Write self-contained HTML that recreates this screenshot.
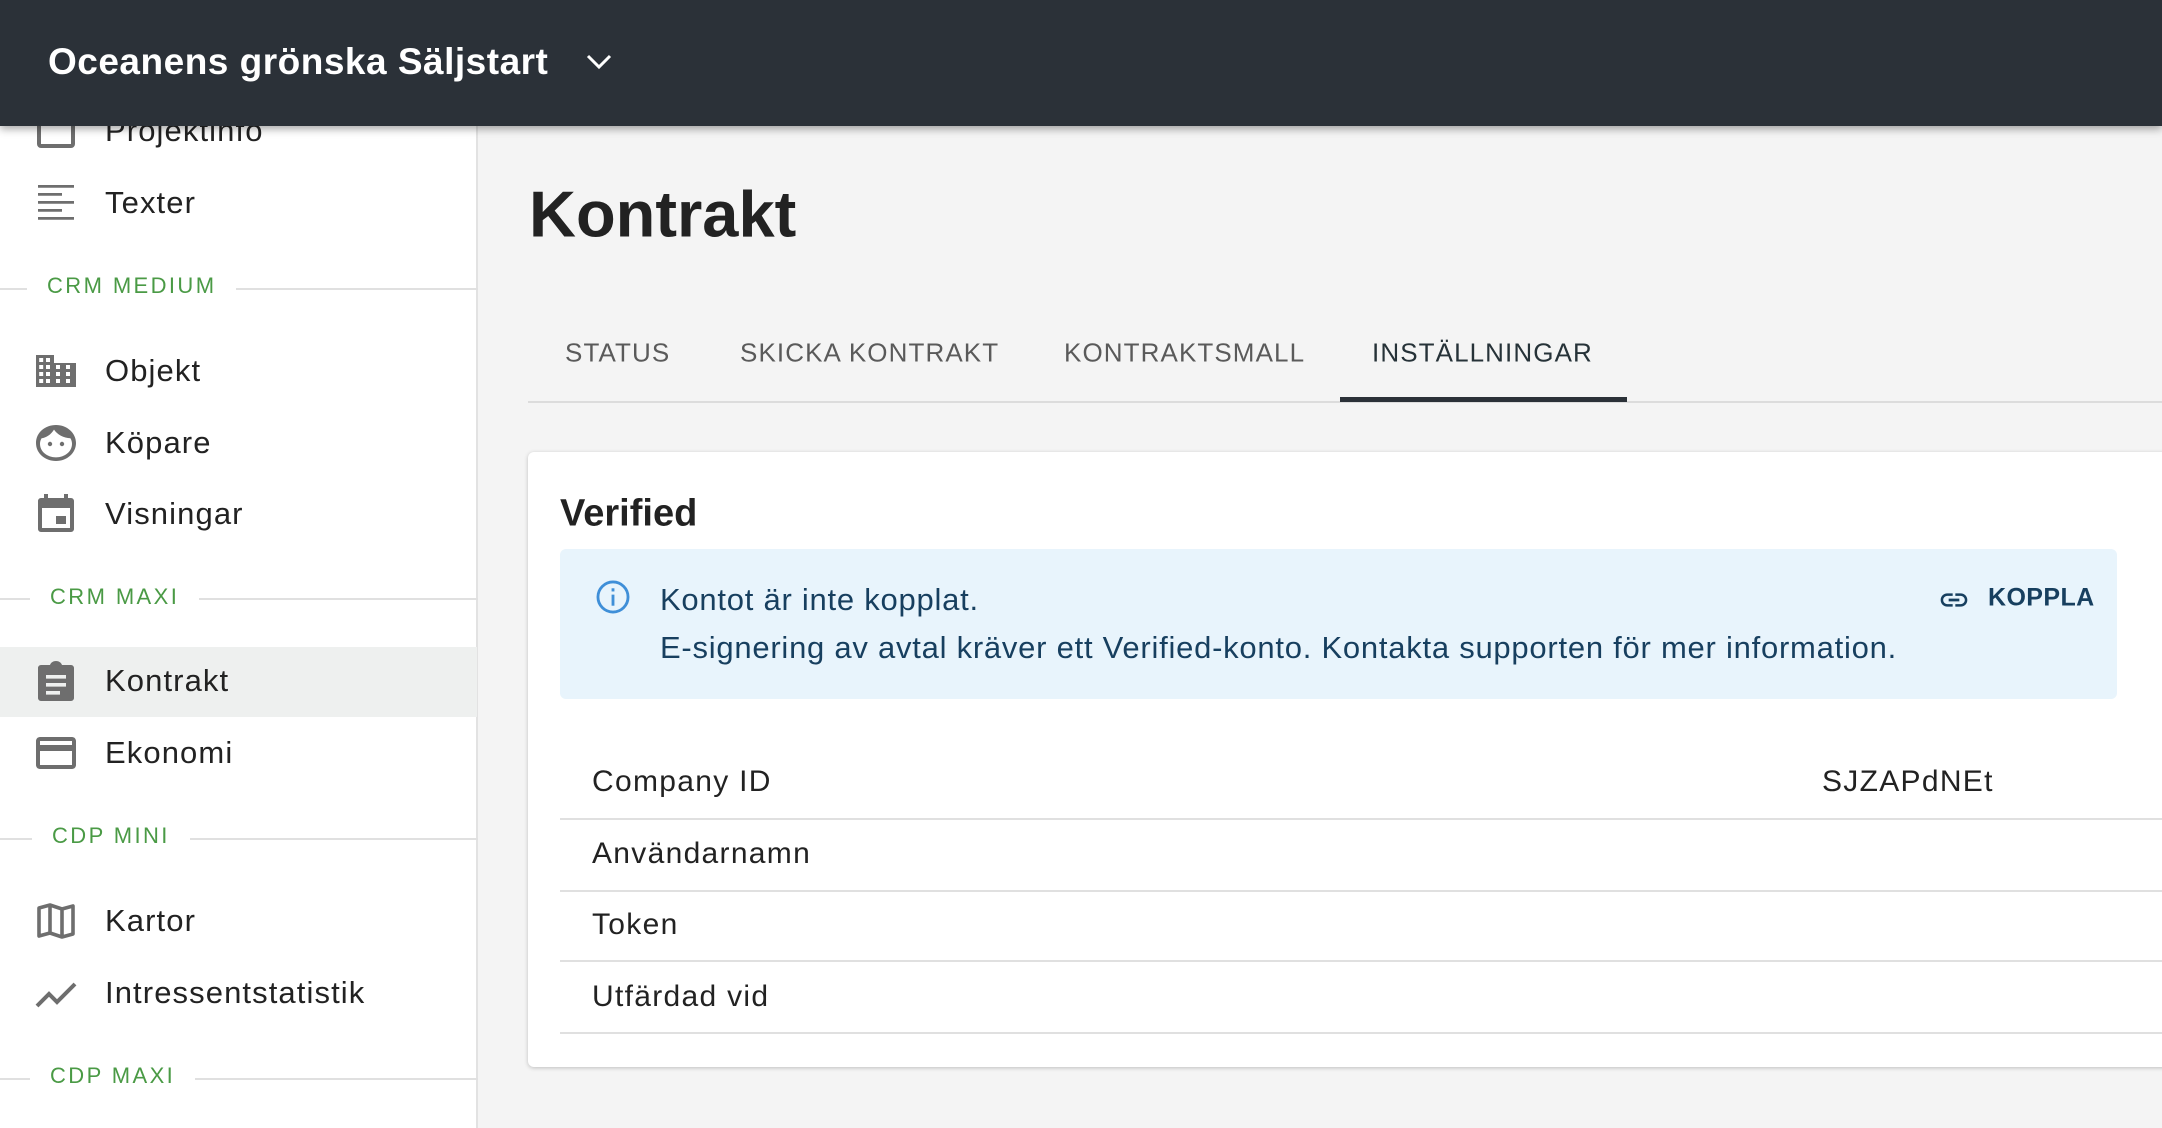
<!DOCTYPE html>
<html><head><meta charset="utf-8"><style>
*{margin:0;padding:0;box-sizing:border-box}
body{width:2162px;height:1128px;overflow:hidden;background:#f4f4f4;font-family:"Liberation Sans",sans-serif;position:relative;color:#222}
.a{position:absolute;white-space:nowrap}
#hdr{left:0;top:0;width:2162px;height:126px;background:#2b3138;box-shadow:0 3px 8px rgba(0,0,0,.35);z-index:5}
#side{left:0;top:0;width:478px;height:1128px;background:#fff;border-right:2px solid #e2e2e2}
.it{left:105px;font-size:31px;letter-spacing:1.1px;color:#222;transform:translateY(-50%)}
.ic{left:32px;width:48px;height:48px;transform:translateY(-50%)}
.sec{left:0;width:478px;height:2px;background:#e0e0e0}
.sl{font-size:22px;letter-spacing:2.4px;color:#4a9a45;background:#fff;padding:0 20px;transform:translateY(-50%)}
.tab{font-size:26px;color:#5a5a5a;letter-spacing:1.1px;transform:translateY(-50%)}
.row{left:560px;width:1602px;height:2px;background:#e0e0e0}
.rt{left:592px;font-size:30px;letter-spacing:1.3px;color:#222;transform:translateY(-50%)}
.al{left:660px;font-size:31px;letter-spacing:.75px;color:#173f5f;transform:translateY(-50%)}
</style></head><body>
<div id="side" class="a"></div>
<div class="a" style="left:0;top:647px;width:477px;height:70px;background:#eef0ef"></div>

<svg class="a ic" style="top:131px" viewBox="0 0 24 24"><rect x="3.5" y="4.5" width="17" height="15" rx="1" fill="none" stroke="#6e6e6e" stroke-width="2"/></svg>
<div class="a it" style="top:131px">Projektinfo</div>
<svg class="a ic" style="top:203px" viewBox="0 0 24 24"><path fill="#6e6e6e" d="M3 3h18v1.4H3zM3 7h12v1.4H3zM3 11h18v1.4H3zM3 15h12v1.4H3zM3 19h18v1.4H3z"/></svg>
<div class="a it" style="top:203px">Texter</div>

<div class="a sec" style="top:288px"></div><div class="a sl" style="left:27px;top:286px">CRM MEDIUM</div>

<svg class="a ic" style="top:371px" viewBox="0 0 24 24"><path fill="#6e6e6e" d="M2 4h9v4h11v12H2zM3.6 5.5v2h2v-2zm3.4 0v2h2v-2zM3.6 9v2h2V9zm3.4 0v2h2V9zm5 0v2h2V9zm5 0v2h2V9zM3.6 12.5v2h2v-2zm3.4 0v2h2v-2zm5 0v2h2v-2zm5 0v2h2v-2zM3.6 16v2h2v-2zm3.4 0v2h2v-2zm5 0v2h2v-2zm5 0v2h2v-2z" fill-rule="evenodd"/></svg>
<div class="a it" style="top:371px">Objekt</div>
<svg class="a ic" style="top:443px" viewBox="0 0 24 24"><path fill="#6e6e6e" fill-rule="evenodd" d="M12 3C6.5 3 2 6.8 2 12s4.5 9 10 9 10-4 10-9-4.5-9-10-9zm0 16.2c-4.3 0-8-2.8-8-6.8 0-1.1.3-2 .8-2.8C7 9.4 9.5 7.8 11 5.3c1.6 2.5 4.9 4.2 8.2 4.3.5.8.8 1.8.8 2.8 0 4-3.7 6.8-8 6.8z"/><circle cx="9" cy="12.5" r="1.1" fill="#6e6e6e"/><circle cx="15" cy="12.5" r="1.1" fill="#6e6e6e"/></svg>
<div class="a it" style="top:443px">Köpare</div>
<svg class="a ic" style="top:514px" viewBox="0 0 24 24"><path fill="#6e6e6e" fill-rule="evenodd" d="M6 2h2v2h8V2h2v2h1.5c.8 0 1.5.7 1.5 1.5v14c0 .8-.7 1.5-1.5 1.5h-15C3.7 21 3 20.3 3 19.5v-14C3 4.7 3.7 4 4.5 4H6zM5 9v10h14V9z"/><rect x="12" y="13" width="5" height="4" fill="#6e6e6e"/></svg>
<div class="a it" style="top:514px">Visningar</div>

<div class="a sec" style="top:598px"></div><div class="a sl" style="left:30px;top:597px">CRM MAXI</div>

<svg class="a ic" style="top:681px" viewBox="0 0 24 24"><path fill="#6e6e6e" fill-rule="evenodd" d="M4.5 4H9c.4-1.2 1.6-2 3-2s2.6.8 3 2h4.5c.8 0 1.5.7 1.5 1.5v15c0 .8-.7 1.5-1.5 1.5h-15C3.7 22 3 21.3 3 20.5v-15C3 4.7 3.7 4 4.5 4zM7 9h10v1.8H7zm0 4h10v1.8H7zm0 4h7v1.8H7z"/></svg>
<div class="a it" style="top:681px">Kontrakt</div>
<svg class="a ic" style="top:753px" viewBox="0 0 24 24"><path fill="#6e6e6e" fill-rule="evenodd" d="M4 4h16c1.1 0 2 .9 2 2v12c0 1.1-.9 2-2 2H4c-1.1 0-2-.9-2-2V6c0-1.1.9-2 2-2zm0 2v2h16V6zm0 5v7h16v-7z"/></svg>
<div class="a it" style="top:753px">Ekonomi</div>

<div class="a sec" style="top:838px"></div><div class="a sl" style="left:32px;top:836px">CDP MINI</div>

<svg class="a ic" style="top:921px" viewBox="0 0 24 24"><path fill="none" stroke="#6e6e6e" stroke-width="1.8" stroke-linejoin="round" d="M3.5 5.5 9 4l6 2 5.5-1.5v14L15 20l-6-2-5.5 1.5zM9 4v14M15 6v14"/></svg>
<div class="a it" style="top:921px">Kartor</div>
<svg class="a ic" style="top:993px" viewBox="0 0 24 24"><path fill="none" stroke="#6e6e6e" stroke-width="2" d="M2.5 18.5l6-6 4 4 9-9"/></svg>
<div class="a it" style="top:993px">Intressentstatistik</div>

<div class="a sec" style="top:1078px"></div><div class="a sl" style="left:30px;top:1076px">CDP MAXI</div>

<div id="hdr" class="a"></div>
<div class="a" style="left:48px;top:62px;transform:translateY(-50%);font-size:37px;letter-spacing:.5px;font-weight:bold;color:#fff;z-index:6">Oceanens grönska Säljstart</div>
<svg class="a" style="left:584px;top:50px;z-index:6" width="30" height="24" viewBox="0 0 30 24"><path d="M4 6l11 11L26 6" fill="none" stroke="#fff" stroke-width="3"/></svg>

<div class="a" style="left:529px;top:214px;transform:translateY(-50%);font-size:65px;font-weight:bold;color:#222">Kontrakt</div>

<div class="a tab" style="left:565px;top:353px">STATUS</div>
<div class="a tab" style="left:740px;top:353px">SKICKA KONTRAKT</div>
<div class="a tab" style="left:1064px;top:353px">KONTRAKTSMALL</div>
<div class="a tab" style="left:1372px;top:353px;color:#263238">INSTÄLLNINGAR</div>
<div class="a" style="left:528px;top:401px;width:1634px;height:2px;background:#dcdcdc"></div>
<div class="a" style="left:1340px;top:397px;width:287px;height:5px;background:#2b3138"></div>

<div class="a" style="left:528px;top:452px;width:1660px;height:615px;background:#fff;border-radius:6px;box-shadow:0 1px 4px rgba(0,0,0,.22)"></div>
<div class="a" style="left:560px;top:514px;transform:translateY(-50%);font-size:38px;font-weight:bold;color:#222">Verified</div>

<div class="a" style="left:560px;top:549px;width:1557px;height:150px;background:#e8f4fc;border-radius:6px"></div>
<svg class="a" style="left:594px;top:578px" width="38" height="38" viewBox="0 0 24 24"><circle cx="12" cy="12" r="9.5" fill="none" stroke="#3f8fd8" stroke-width="1.8"/><rect x="11.1" y="10.5" width="1.8" height="7" fill="#3f8fd8"/><rect x="11.1" y="6.5" width="1.8" height="2" fill="#3f8fd8"/></svg>
<div class="a al" style="top:600px">Kontot är inte kopplat.</div>
<div class="a al" style="top:648px">E-signering av avtal kräver ett Verified-konto. Kontakta supporten för mer information.</div>
<svg class="a" style="left:1938px;top:584px" width="32" height="32" viewBox="0 0 24 24"><path fill="#173f5f" d="M3.9 12c0-1.7 1.4-3.1 3.1-3.1h4V7H7c-2.8 0-5 2.2-5 5s2.2 5 5 5h4v-1.9H7c-1.7 0-3.1-1.4-3.1-3.1zM8 13h8v-2H8zm9-6h-4v1.9h4c1.7 0 3.1 1.4 3.1 3.1s-1.4 3.1-3.1 3.1h-4V17h4c2.8 0 5-2.2 5-5s-2.2-5-5-5z"/></svg>
<div class="a" style="left:1988px;top:598px;transform:translateY(-50%);font-size:25px;font-weight:bold;color:#173f5f;letter-spacing:.4px">KOPPLA</div>

<div class="a rt" style="top:782px">Company ID</div>
<div class="a rt" style="left:1822px;top:782px">SJZAPdNEt</div>
<div class="a row" style="top:818px"></div>
<div class="a rt" style="top:854px">Användarnamn</div>
<div class="a row" style="top:890px"></div>
<div class="a rt" style="top:925px">Token</div>
<div class="a row" style="top:960px"></div>
<div class="a rt" style="top:997px">Utfärdad vid</div>
<div class="a row" style="top:1032px"></div>
</body></html>
